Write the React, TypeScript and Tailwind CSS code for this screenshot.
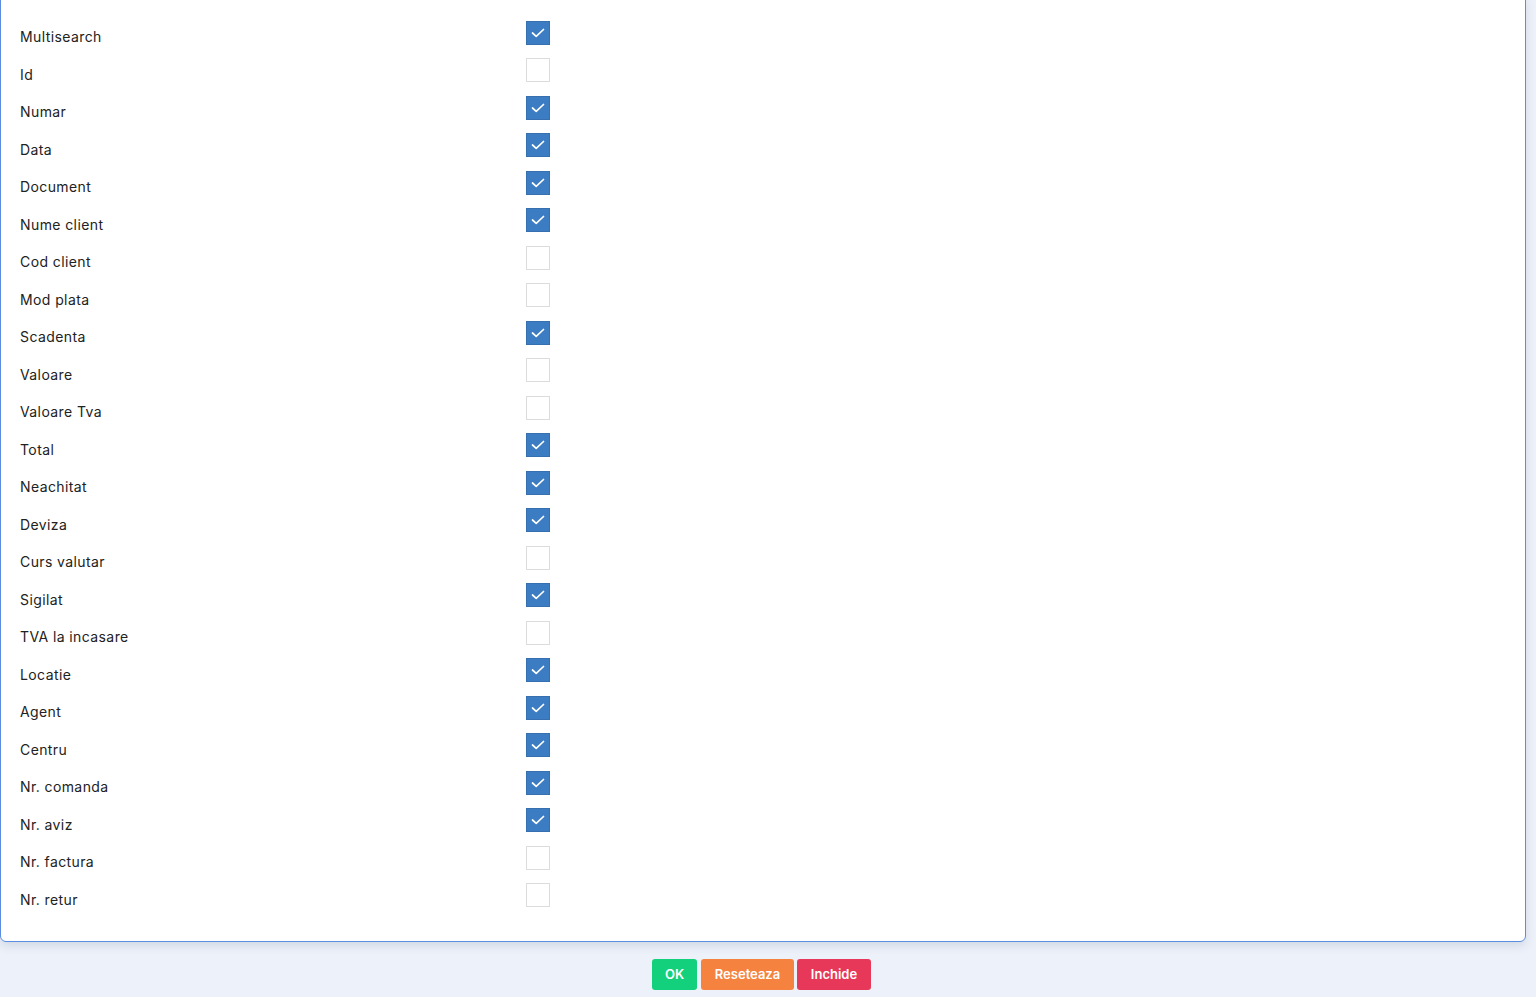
import { useState } from 'react';

const columns: { label: string; checked: boolean }[] = [
  { label: 'Multisearch', checked: true },
  { label: 'Id', checked: false },
  { label: 'Numar', checked: true },
  { label: 'Data', checked: true },
  { label: 'Document', checked: true },
  { label: 'Nume client', checked: true },
  { label: 'Cod client', checked: false },
  { label: 'Mod plata', checked: false },
  { label: 'Scadenta', checked: true },
  { label: 'Valoare', checked: false },
  { label: 'Valoare Tva', checked: false },
  { label: 'Total', checked: true },
  { label: 'Neachitat', checked: true },
  { label: 'Deviza', checked: true },
  { label: 'Curs valutar', checked: false },
  { label: 'Sigilat', checked: true },
  { label: 'TVA la incasare', checked: false },
  { label: 'Locatie', checked: true },
  { label: 'Agent', checked: true },
  { label: 'Centru', checked: true },
  { label: 'Nr. comanda', checked: true },
  { label: 'Nr. aviz', checked: true },
  { label: 'Nr. factura', checked: false },
  { label: 'Nr. retur', checked: false },
];

export default function App() {
  const [state, setState] = useState(columns.map((c) => c.checked));

  const toggle = (i: number) => {
    setState((prev) => prev.map((v, idx) => (idx === i ? !v : v)));
  };

  return (
    <div
      className="min-h-screen bg-[#edf1f9] pr-[10px]"
      style={{ fontFamily: 'Inter, "Noto Sans", sans-serif' }}
    >
      {/* Column picker panel */}
      <div className="-mt-[6px] bg-white border border-[#5b8ee0] rounded-md shadow-[0_4px_10px_rgba(60,80,120,0.15)] pt-[19px] pb-[27px]">
        {columns.map((col, i) => (
          <div key={col.label} className="flex items-center h-[37.5px] pl-[19px]">
            <span className="w-[506px] pt-[8px] text-[14px] text-[#222] tracking-[0.4px]">{col.label}</span>
            <button
              onClick={() => toggle(i)}
              className={
                state[i]
                  ? 'w-[24px] h-[24px] flex items-center justify-center bg-[#3b7cc2] border border-[#3670b0]'
                  : 'w-[24px] h-[24px] flex items-center justify-center bg-white border border-[#dcdcdc]'
              }
            >
              {state[i] && (
                <svg width="16" height="16" viewBox="0 0 16 16" fill="none">
                  <path d="M2.5 8 L6.2 11.3 L13.5 4.5" stroke="white" strokeWidth="1.7" strokeLinecap="round" strokeLinejoin="round" />
                </svg>
              )}
            </button>
          </div>
        ))}
      </div>

      {/* Footer actions */}
      <div className="flex justify-center pt-[17px] pb-[7px] pr-[3px]">
        <button className="h-[31px] w-[45px] rounded-[3px] bg-[#12d07c] text-white text-[13px] font-semibold">OK</button>
        <button className="ml-[4px] h-[31px] w-[93px] rounded-[3px] bg-[#f5833f] text-white text-[13px] font-semibold">Reseteaza</button>
        <button className="ml-[3px] h-[31px] w-[74px] rounded-[3px] bg-[#e8385a] text-white text-[13px] font-semibold">Inchide</button>
      </div>
    </div>
  );
}
